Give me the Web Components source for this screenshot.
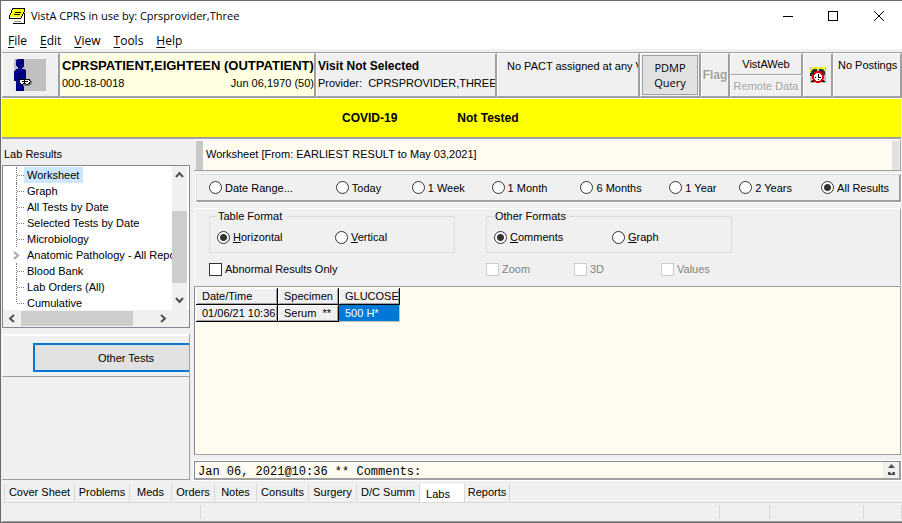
<!DOCTYPE html>
<html lang="en">
<head>
<meta charset="utf-8">
<title>VistA CPRS</title>
<style>
html,body{margin:0;height:100%}
body{font:11px/16px "Liberation Sans",Arial,sans-serif;color:#000;background:#f0f0f0;
--ui:"Open Sans","Noto Sans",sans-serif;--dark:#a0a0a0;--face:#f0f0f0;--line:#dcdcdc;--cream:#fffbf0}
</style>
</head>
<body>
<cprs-window></cprs-window>
<script>
const define=(name,css,html,init)=>customElements.define(name,class extends HTMLElement{
  constructor(){
    super();
    const r=this.attachShadow({mode:'open'});
    r.innerHTML='<style>*{box-sizing:border-box}button{font:inherit;color:inherit;margin:0;padding:0;border:0;background:none}'+css+'</style>'+(typeof html==='string'?html:'');
  }
  connectedCallback(){
    if(this.done)return;
    this.done=true;
    if(typeof html==='function')this.shadowRoot.innerHTML+=html(this);
    if(init)init(this.shadowRoot);
  }
});

define('title-bar',`
:host{display:flex;align-items:center;height:29px;background:#fff;padding-left:7px;font:11px/16px var(--ui)}
svg{display:block}
h1{font:inherit;margin:0 0 0 5px;flex:1;white-space:nowrap}
button{width:46px;height:29px;display:grid;place-items:center}
button:nth-of-type(1){width:45px}`,
`<svg width="18" height="18" viewBox="0 0 18 18" shape-rendering="crispEdges">
<path d="M4 15h12V6h1v11H5v-1H4z" fill="#000"/><path d="M4 12h12v4H4z" fill="#fff"/>
<path d="M4 1h13v3l-2 4-2 4H1V9l2-4z" fill="#000"/><path d="M5 2h11v2l-2 4-2 3H2V9l2-4z" fill="#ff0"/>
<path d="M7 5h6v1H7zM6 7h6v1H6z" fill="#000"/><path d="M2 10h11v1H2z" fill="#fff"/><path d="M6 14h7v1H6z" fill="#999"/></svg>
<h1><slot></slot></h1>
<button aria-label="Minimize"><svg width="12" height="12" shape-rendering="crispEdges"><path d="M1 6.5h10" stroke="#000"/></svg></button>
<button aria-label="Maximize"><svg width="12" height="12" shape-rendering="crispEdges"><path d="M1.500 1.500h9v9h-9z" fill="none" stroke="#000"/></svg></button>
<button aria-label="Close"><svg width="12" height="12"><path d="M1 1l10 10M11 1L1 11" stroke="#000"/></svg></button>`);

define('menu-bar',`
:host{display:flex;height:22px;background:#fff;border-bottom:3px solid var(--face);padding-left:7px;gap:13px;font:12px/22px var(--ui)}
button u{text-underline-offset:2px}`,
`<button><u>F</u>ile</button><button><u>E</u>dit</button><button><u>V</u>iew</button><button><u>T</u>ools</button><button><u>H</u>elp</button>`);

define('patient-bar',`
:host{display:grid;grid-template-columns:58px 256px 181px minmax(100px,1fr) 61px 29px 73px 30px 69px;height:46px;border-top:1px solid var(--dark);margin:0 0 0 1px;border-bottom:1px solid var(--dark)}
.cell{border:1px solid;border-color:#fff var(--dark) var(--dark) #fff;border-right-width:2px;overflow:hidden;min-width:0;white-space:nowrap;background:var(--face)}
.col{display:flex;flex-direction:column;justify-content:flex-start;align-items:stretch;text-align:left}
.id{background:#ffffe1;padding:3px 0 0 1px}
.visit{padding:3px 0 0 1px}
b{font-size:12px;line-height:18px}
.id b{font-size:13px}
.row{display:flex;justify-content:space-between}
.pact{padding:4px 0 0 9px}
.center{display:grid;place-items:center}
.post{padding:3px 0 0 4px}
.pdmp{padding:1px}
.pdmp button{width:100%;height:100%;border:1px solid var(--dark);background:#e1e1e1;font:11px/15px var(--ui)}
.off{color:#a0a0a0;text-shadow:1px 1px #fff}
.flag{font-weight:bold;font-size:12px}
.two{display:grid;grid-template-rows:22px 22px}
.icon{padding:5px 0 0 11px}
svg{display:block}`,
`<button class="cell col icon" aria-label="Patient"><svg width="32" height="32" shape-rendering="crispEdges"><path d="M0 0h32v32H0z" fill="#c0c0c0"/>
<path d="M0 22h2v10H0z" fill="#e8e8e8"/><path d="M3 0h6l1 1v6L8 9v1h2l2 2v10h-2v10H2V22H0V12l2-2h2V9L2 7V1z" fill="#000080"/>
<path d="M8 20h8l2 3v2l-3 2H9z" fill="#808080"/>
<rect x="5" y="20" width="6" height="5" rx="2" fill="#fff" stroke="#000"/><rect x="10" y="20" width="6" height="5" rx="2" fill="#fff" stroke="#000"/><path d="M8 22.500h6" stroke="#000"/></svg></button>
<button class="cell col id"><b>CPRSPATIENT,EIGHTEEN (OUTPATIENT)</b><span class="row"><span>000-18-0018</span><span>Jun 06,1970 (50)</span></span></button>
<button class="cell col visit"><b>Visit Not Selected</b><span>Provider:&nbsp; CPRSPROVIDER,THREE</span></button>
<div class="cell pact">No PACT assigned at any VA</div>
<div class="cell pdmp"><button>PDMP<br>Query</button></div>
<button class="cell center flag off" disabled>Flag</button>
<div class="two"><button class="cell center">VistAWeb</button><button class="cell center off" disabled>Remote Data</button></div>
<button class="cell center" aria-label="Reminders"><svg width="16" height="16" viewBox="0 0 16 16" shape-rendering="crispEdges">
<path d="M0 0h16v16H0z" fill="#c0c0c0"/><path d="M1 0h3v2H1zM6 0h4v2H6zM12 0h3v2h-3zM0 3h2v2H0zM14 3h2v2h-2zM4 1h2v2H4zM10 1h2v2h-2z" fill="#ff0"/>
<path d="M1 4l3-2h3v3L2 9H0zM9 2h3l3 2v4l-2 1-4-4z" fill="#303030"/><path d="M2 15l3-4M14 15l-3-4" stroke="#000" stroke-width="2"/>
<circle cx="8" cy="10" r="5" fill="#fff" stroke="#e00000" stroke-width="2"/><path d="M8 7v3h3" fill="none" stroke="#000"/><path d="M8 13v-1M5 10h1" stroke="#000"/></svg></button>
<button class="cell col post">No Postings</button>`);

define('covid-banner',`
:host{display:flex;gap:60px;align-items:center;height:41px;margin:0 1px 0 1px;padding-left:340px;background:#ff0;border-top:1px solid #fff;border-bottom:2px solid var(--dark);font-weight:bold;font-size:12px}`,
`<slot></slot>`);

define('lab-tree',`
:host{display:block;height:163px;border:1px solid #828790;background:#fff}
.grid{display:grid;grid-template:144px 17px/minmax(0,1fr) 15px 2px;overflow:hidden}
ul{list-style:none;margin:0;padding:1px 0 0 13px;overflow:hidden;height:144px;white-space:nowrap}
li{display:flex;align-items:center;height:16px;border-left:1px dotted #808080}
li:last-child{border-left-color:transparent;background:repeating-linear-gradient(#808080 0 1px,#fff 1px 2px) 0 0/1px 8px no-repeat border-box}
li::before{content:"";width:7px;flex:none;border-top:1px dotted #808080}
a{color:inherit;text-decoration:none;padding:0 4px 0 3px}
a.on{background:#cce8ff}
li.more{border-left-color:transparent}
li.more svg{flex:none;margin-left:-4px}
li.more::before{width:0}
.v{background:linear-gradient(#cdcdcd,#cdcdcd) 0 45px/15px 72px no-repeat var(--face);display:flex;flex-direction:column;justify-content:space-between;align-items:center}
.h{grid-column:1/4;background:var(--face);display:flex;align-items:center}
.h i{width:112px;height:15px;background:#cdcdcd;margin-right:21px}
button{width:15px;height:18px;display:grid;place-items:center}
.h button{width:18px}
path{fill:none;stroke:#505050;stroke-width:2}.more path{stroke:#a6a6a6}`,
`<div class="grid"><ul></ul>
<div class="v"><button aria-label="Scroll up"><svg width="9" height="8"><path d="M1 6l3.500-4L8 6"/></svg></button><button aria-label="Scroll down"><svg width="9" height="8"><path d="M1 1l3.500 4L8 1"/></svg></button></div><div></div>
<div class="h"><button aria-label="Scroll left"><svg width="8" height="9"><path d="M6 1L2 4.500 6 8"/></svg></button><i></i><button aria-label="Scroll right"><svg width="8" height="9"><path d="M2 1l4 3.500L2 8"/></svg></button></div></div>`,
r=>{
  const items=['Worksheet','Graph','All Tests by Date','Selected Tests by Date','Microbiology','Anatomic Pathology - All Reports','Blood Bank','Lab Orders (All)','Cumulative'];
  r.querySelector('ul').innerHTML=items.map((t,i)=>`<li class="${i===5?'more':''}">${i===5?'<svg width="11" height="9"><path d="M1 1l4 3.500L1 8"/></svg>':''}<a href="#"${i===0?' class="on"':''}>${t}</a></li>`).join('');
});

define('lab-sidebar',`
:host{display:flex;flex-direction:column;width:188px;flex:none;border-bottom:1px solid var(--dark)}
h2{font:inherit;margin:7px 0 3px 2px}
.rest{flex:1;margin-top:6px;border-right:1px solid var(--dark);overflow:hidden}
.panel{border-top:2px solid #fff;border-left:1px solid #fff;border-bottom:1px solid var(--dark);height:43px;padding:7px 0 0 30px}
button{display:block;width:100%;height:29px;border:2px solid #0078d7;border-right:0;background:#e1e1e1;padding-left:28px}`,
`<h2>Lab Results</h2><lab-tree></lab-tree><div class="rest"><div class="panel"><button>Other Tests</button></div></div>`);

// One labelled radio or check box; attributes: type, label, name, checked, disabled, key (underlines the first letter)
define('form-option',`
:host{display:block;white-space:nowrap}
label{display:inline-flex;align-items:center;gap:3px;vertical-align:top}
input{appearance:none;margin:0;width:13px;height:13px;flex:none;background:#fff;border:1px solid #333}
input[type=radio]{border-radius:50%}
input[type=radio]:checked{background:radial-gradient(circle,#333 0 3px,#fff 4px)}
input:disabled{border-color:#ccc}
input:disabled+span{color:#838383}`,
e=>{const t=e.getAttribute('label'),k=e.hasAttribute('key');
return `<label><input type="${e.getAttribute('type')||'radio'}"${e.hasAttribute('checked')?' checked':''}${e.hasAttribute('disabled')?' disabled':''}><span>${k?`<u>${t[0]}</u>${t.slice(1)}`:t}</span></label>`});

define('date-ranges',`
:host{display:grid;grid-template-columns:127fr 76fr 80fr 89fr 89fr 70fr 82fr 78fr;align-items:center;height:28px;padding:0 0 0 12px;border:1px solid var(--line);outline:1px solid #fff;border-right:2px solid var(--dark);border-bottom:2px solid var(--dark);margin:3px 0 0 2px}`,
`<form-option label="Date Range..."></form-option><form-option label="Today"></form-option><form-option label="1 Week"></form-option><form-option label="1 Month"></form-option><form-option label="6 Months"></form-option><form-option label="1 Year"></form-option><form-option label="2 Years"></form-option><form-option label="All Results" checked></form-option>`);

define('format-group',`
:host{display:block}
fieldset{margin:0;height:44px;padding:6px 0 0 7px;border:1px solid var(--line);min-width:0}
legend{padding:0 4px 0 1px;line-height:14px}
.row{display:grid;grid-template-columns:118px 1fr}`,
e=>`<fieldset><legend>${e.getAttribute('legend')}</legend><div class="row"><slot></slot></div></fieldset>`);

define('format-panel',`
:host{display:grid;grid-template-columns:246px 246px;column-gap:31px;align-content:start;height:77px;margin-top:6px;padding:0 0 0 14px;border-top:1px solid #fff;border-left:1px solid #fff;border-right:1px solid var(--dark)}
.opts{display:flex;margin-top:8px}
.zoom{width:88px}.three{width:87px}`,
`<format-group legend="Table Format"><form-option label="Horizontal" key checked></form-option><form-option label="Vertical" key></form-option></format-group>
<format-group legend="Other Formats"><form-option label="Comments" key checked></form-option><form-option label="Graph" key></form-option></format-group>
<div class="opts"><form-option type="checkbox" label="Abnormal Results Only"></form-option></div>
<div class="opts"><form-option class="zoom" type="checkbox" label="Zoom" disabled></form-option><form-option class="three" type="checkbox" label="3D" disabled></form-option><form-option type="checkbox" label="Values" disabled></form-option></div>`);

define('result-grid',`
:host{display:block;flex:1;min-height:60px;background:var(--cream);border:1px solid var(--dark);border-left-color:#828790;margin-top:1px;padding:1px 0 0 1px}
table{border-collapse:separate;border-spacing:0;table-layout:fixed;width:204px;line-height:14px}
th,td{font-weight:normal;text-align:left;height:17px;padding:0 0 0 6px;background:var(--face);overflow:hidden;white-space:nowrap;border-right:1px solid #000;border-bottom:1px solid #000;box-shadow:inset 1px 1px #fff,inset -1px -1px var(--dark)}
td.sel{background:#0078d7;color:#fff;box-shadow:none;border-color:#c8c0b0}`,
`<table><colgroup><col style="width:82px"><col style="width:61px"><col style="width:61px"></colgroup>
<thead><tr><th>Date/Time</th><th>Specimen</th><th>GLUCOSE</th></tr></thead>
<tbody><tr><td>01/06/21 10:36</td><td>Serum&nbsp; **</td><td class="sel">500 H*</td></tr></tbody></table>`);

define('comment-box',`
:host{display:flex;height:19px;margin-top:6px;background:var(--cream);border:1px solid #828790;border-right:2px solid var(--dark);border-bottom:2px solid var(--dark);outline:1px solid #fff}
input{flex:1;min-width:0;border:0;padding:3px 3px 0;margin:0;background:none;outline:0;font:12px/14px "Liberation Mono","Courier New",monospace}
div{display:grid;width:16px;background:var(--face);place-items:center;align-content:space-evenly}
button{height:6px;display:grid;place-items:center}`,
`<input aria-label="Comments" readonly value="Jan 06, 2021@10:36 ** Comments:">
<div><button aria-label="Scroll up"><svg width="7" height="4"><path d="M0 4l3.500-4L7 4z" fill="#505050"/></svg></button><button aria-label="Scroll down"><svg width="7" height="4"><path d="M0 0h2l1.500 2L5 0h2v3H0z" fill="#505050"/></svg></button></div>`);

define('lab-content',`
:host{display:flex;flex-direction:column;flex:1;min-width:0}
header{height:29px;margin-top:1px;padding:5px 0 0 3px;background:var(--cream);border-left:7px solid #c8c8c8;border-right:7px solid #e1e1e1}
.frame{border-top:1px solid #fff;border-bottom:1px solid var(--dark);border-right:1px solid var(--dark);padding:0 1px 0 2px}`,
`<div class="frame"><header>Worksheet [From: EARLIEST RESULT to May 03,2021]</header></div>
<date-ranges></date-ranges><format-panel></format-panel><result-grid></result-grid><comment-box></comment-box>`);

define('page-tabs',`
:host{display:block;margin-left:1px;border-bottom:1px solid #d8d8d8}
nav{display:flex;height:22px;padding:4px 0 0 2px}
button{height:17px;padding-bottom:2px;border-left:1px solid #d8d8d8;white-space:nowrap}
.on{height:18px;background:#fff;padding:2px 8px 0 0;border-right:1px solid #d8d8d8}
.last{border-right:1px solid #d8d8d8;border-left:0}`,
`<nav></nav>`,
r=>{const tabs=[['Cover Sheet',70],['Problems',55],['Meds',42],['Orders',43],['Notes',42],['Consults',52],['Surgery',48],['D/C Summ',63],['Labs',46],['Reports',45]];
r.querySelector('nav').innerHTML=tabs.map(([t,w])=>`<button class="${t==='Labs'?'on':t==='Reports'?'last':''}" style="width:${w}px">${t}</button>`).join('')});

define('status-bar',`
:host{display:grid;grid-template-columns:199px 1fr 50px 94px 38px;height:19px;padding:2px 0;border-bottom:1px solid var(--dark);margin-left:1px}
i{border-right:1px solid #d8d8d8}`,`<i></i><i></i><i></i><i></i><i></i>`);

define('cprs-window',`
:host{display:flex;flex-direction:column;height:100vh;border:1px solid #6b6b6b;border-right:0;box-sizing:border-box;background:var(--face);overflow:hidden}
main{display:flex;flex:1;min-height:0;margin:0 1px 0 1px;gap:4px}`,
`<title-bar>VistA CPRS in use by: Cprsprovider,Three</title-bar><menu-bar></menu-bar><patient-bar></patient-bar>
<covid-banner><span>COVID-19</span><span>Not Tested</span></covid-banner>
<main><lab-sidebar></lab-sidebar><lab-content></lab-content></main>
<page-tabs></page-tabs><status-bar></status-bar>`);
</script>
</body>
</html>
